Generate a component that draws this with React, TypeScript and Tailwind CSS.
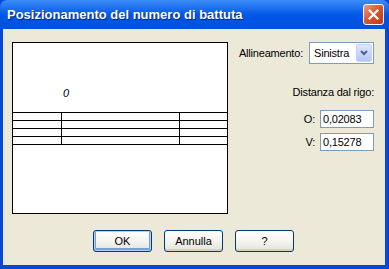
import React from "react";

const font = { fontFamily: '"Liberation Sans", Arial, sans-serif' };

function XpButton({ label, isDefault }: { label: string; isDefault?: boolean }) {
  return (
    <div
      className={
        "w-[59px] h-[22px] rounded-[3px] border border-[#003C74] flex items-center justify-center text-[11px] text-black bg-gradient-to-b from-[#FFFFFF] via-[#F5F4EF] to-[#E3E2DA] " +
        (isDefault ? "shadow-[inset_0_0_0_1px_#B6CCF2,inset_0_-1px_0_2px_#7C9EDE]" : "shadow-[inset_0_-2px_0_0_#D6D0C5]")
      }
    >
      {label}
    </div>
  );
}

export default function App() {
  return (
    <div className="w-[389px] h-[269px] flex flex-col bg-[#0848D8] overflow-hidden" style={font}>
      {/* Title bar */}
      <div className="h-[29px] shrink-0 flex items-center pl-[7px] pr-[5px] bg-gradient-to-b from-[#3C8CF7] via-[#0058E8] to-[#0050DD] rounded-t-[7px]">
        <span className="flex-1 text-white font-bold text-[13px] [text-shadow:1px_1px_0_#0A246A] pt-[1px]">
          Posizionamento del numero di battuta
        </span>
        <div className="w-[21px] h-[21px] rounded-[3px] border border-white bg-gradient-to-br from-[#E99A7E] via-[#D9522C] to-[#C23B16] flex items-center justify-center">
          <svg width="11" height="11" viewBox="0 0 11 11">
            <path d="M1.5 1.5 L9.5 9.5 M9.5 1.5 L1.5 9.5" stroke="white" strokeWidth="2.2" strokeLinecap="square" />
          </svg>
        </div>
      </div>
      {/* Body */}
      <div className="flex-1 ml-[3px] mr-[4px] mb-[4px] bg-[#ECE9D8] flex flex-col pt-[13px] pl-[9px] pr-[11px]">
        <div className="flex">
          <div className="w-[216px] h-[172px] border border-black bg-white shrink-0">
            <svg width="214" height="170" viewBox="0 0 214 170" shapeRendering="crispEdges">
              {[69, 77, 85, 93, 101].map((y) => (
                <line key={y} x1="0" x2="214" y1={y + 0.5} y2={y + 0.5} stroke="black" strokeWidth="1" />
              ))}
              <line x1="48.5" x2="48.5" y1="69" y2="102" stroke="black" strokeWidth="1" />
              <line x1="166.5" x2="166.5" y1="69" y2="102" stroke="black" strokeWidth="1" />
              <text x="50" y="54" fontSize="11" fontStyle="italic" fontFamily='"Liberation Sans", Arial, sans-serif' fill="black">
                0
              </text>
            </svg>
          </div>
          <div className="flex-1 flex flex-col items-end text-[11px] text-black tracking-[-0.2px]">
            <div className="flex items-center h-[22px]">
              <span className="mr-[6px]">Allineamento:</span>
              <div className="w-[65px] h-[22px] border border-[#7F9DB9] bg-white flex items-center pl-[4px] pr-[1px]">
                <span className="flex-1">Sinistra</span>
                <div className="w-[16px] h-[18px] rounded-[2px] bg-gradient-to-b from-[#DCE6FC] to-[#B4C8F6] border border-[#C3D3FD] flex items-center justify-center">
                  <svg width="8" height="6" viewBox="0 0 8 6">
                    <path d="M1 1 L4 4 L7 1" stroke="#4D6185" strokeWidth="2" fill="none" />
                  </svg>
                </div>
              </div>
            </div>
            <div className="mt-[21px] h-[14px] leading-[14px]">Distanza dal rigo:</div>
            <div className="mt-[11px] flex items-center">
              <span className="mr-[5px]">O:</span>
              <div className="w-[54px] h-[18px] border border-[#7F9DB9] bg-white flex items-center pl-[2px]">0,02083</div>
            </div>
            <div className="mt-[5px] flex items-center">
              <span className="mr-[5px]">V:</span>
              <div className="w-[54px] h-[18px] border border-[#7F9DB9] bg-white flex items-center pl-[2px]">0,15278</div>
            </div>
          </div>
        </div>
        <div className="mt-[16px] flex pl-[81px] gap-[12px]">
          <XpButton label="OK" isDefault />
          <XpButton label="Annulla" />
          <XpButton label="?" />
        </div>
      </div>
    </div>
  );
}
